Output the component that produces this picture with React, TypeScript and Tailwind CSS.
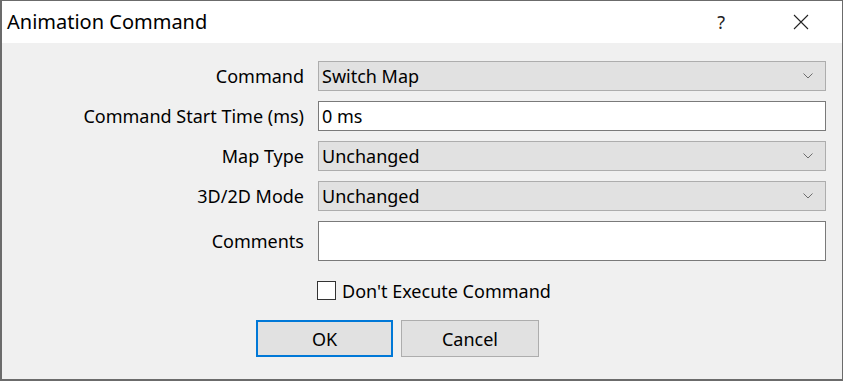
import React from "react";

const font = { fontFamily: '"Noto Sans", "Open Sans", sans-serif' };

function Chevron() {
  return (
    <svg width="10" height="6" viewBox="0 0 10 6" className="mr-[12px]">
      <path d="M0.5 0.5 L5 5 L9.5 0.5" fill="none" stroke="#6d6d6d" strokeWidth="1" />
    </svg>
  );
}

function Combo({ value }: { value: string }) {
  return (
    <div className="flex h-[30px] w-[508px] items-center justify-between border border-[#adadad] bg-[#e1e1e1] pl-[3px]">
      <span>{value}</span>
      <Chevron />
    </div>
  );
}

function Row({ label, children, h = "h-[30px]" }: { label: string; children: React.ReactNode; h?: string }) {
  return (
    <div className={`flex items-center ${h}`}>
      <div className="w-[302px] text-right">{label}</div>
      <div className="ml-[14px]">{children}</div>
    </div>
  );
}

export default function App() {
  return (
    <div
      className="flex h-[381px] w-[843px] flex-col border border-l-2 border-b-2 border-[#6b6b6b] bg-[#f0f0f0] text-[18px] leading-[24px] text-black"
      style={font}
    >
      <div className="flex h-[42px] shrink-0 items-center justify-between bg-white">
        <div className="pl-[5px] text-[20px]">Animation Command</div>
        <div className="flex items-center">
          <span className="mr-[68px] text-[18px] text-[#222]">?</span>
          <svg width="16" height="16" viewBox="0 0 16 16" className="mr-[33px]">
            <path d="M1 1 L15 15 M15 1 L1 15" stroke="#222" strokeWidth="1.1" />
          </svg>
        </div>
      </div>
      <div className="flex flex-col gap-[10px] pt-[18px]">
        <Row label="Command">
          <Combo value="Switch Map" />
        </Row>
        <Row label="Command Start Time (ms)">
          <div className="flex h-[30px] w-[508px] items-center border border-[#7a7a7a] bg-white pl-[3px]">0 ms</div>
        </Row>
        <Row label="Map Type">
          <Combo value="Unchanged" />
        </Row>
        <Row label="3D/2D Mode">
          <Combo value="Unchanged" />
        </Row>
        <Row label="Comments" h="h-[40px]">
          <div className="h-[40px] w-[508px] border border-[#7a7a7a] bg-white" />
        </Row>
      </div>
      <div className="mt-[20px] flex h-[19px] items-center pl-[315px]">
        <div className="h-[19px] w-[19px] border border-[#333] bg-white" />
        <span className="ml-[6px]">Don't Execute Command</span>
      </div>
      <div className="mt-[20px] flex gap-[8px] pl-[254px]">
        <div className="flex h-[37px] w-[137px] items-center justify-center border-2 border-[#0078d7] bg-[#e1e1e1]">OK</div>
        <div className="flex h-[37px] w-[138px] items-center justify-center border border-[#adadad] bg-[#e1e1e1]">Cancel</div>
      </div>
    </div>
  );
}
